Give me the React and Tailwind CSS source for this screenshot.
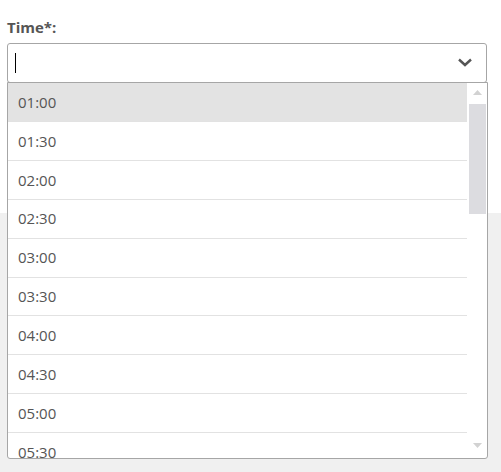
import React from 'react';

const times = ['01:00', '01:30', '02:00', '02:30', '03:00', '03:30', '04:00', '04:30', '05:00', '05:30'];

const App = () => {
  return (
    <div className="relative w-[501px] h-[472px] overflow-hidden bg-[#f0f0f0] font-['Open_Sans',sans-serif]">
      {/* top form area */}
      <div className="h-[213px] bg-white px-[7px] pt-[17px]">
        <label className="block text-[15px] leading-[20px] font-bold text-[#555] mb-[6px]">Time*:</label>
        <div className="relative flex items-center h-[40px] w-[480px] border border-[#a6a6a6] rounded-[3px] bg-white pl-[7px]">
          <span className="w-[1px] h-[20px] bg-black"></span>
          <svg className="absolute right-[13px] top-[13px]" width="16" height="11" viewBox="0 0 16 11">
            <path d="M2 2.5 L8 8 L14 2.5" fill="none" stroke="#555" strokeWidth="2.4" />
          </svg>
        </div>
      </div>

      {/* dropdown list */}
      <div className="absolute left-[7px] top-[82px] w-[481px] h-[377px] flex border border-[#a6a6a6] rounded-b-[3px] bg-white overflow-hidden">
        <ul className="w-[459px] flex flex-col">
          {times.map((t, i) => (
            <li
              key={t}
              className={`shrink-0 flex items-center pl-[10px] text-[15px] text-[#555] ${
                i === 0 ? 'h-[38px] bg-[#e3e3e3]' : 'h-[38.875px] border-t border-[#e2e2e2]'
              }`}
            >
              {t}
            </li>
          ))}
        </ul>
        {/* scrollbar */}
        <div className="relative flex-1 flex flex-col items-center">
          <svg className="mt-[7px]" width="9" height="5" viewBox="0 0 9 5">
            <path d="M0 5 L4.5 0 L9 5 Z" fill="#d2d2d2" />
          </svg>
          <div className="mt-[9px] w-[17px] h-[110px] bg-[#dcdce0]"></div>
          <svg className="absolute bottom-[10px]" width="9" height="5" viewBox="0 0 9 5">
            <path d="M0 0 L9 0 L4.5 5 Z" fill="#d2d2d2" />
          </svg>
        </div>
      </div>
    </div>
  );
};

export default App;
